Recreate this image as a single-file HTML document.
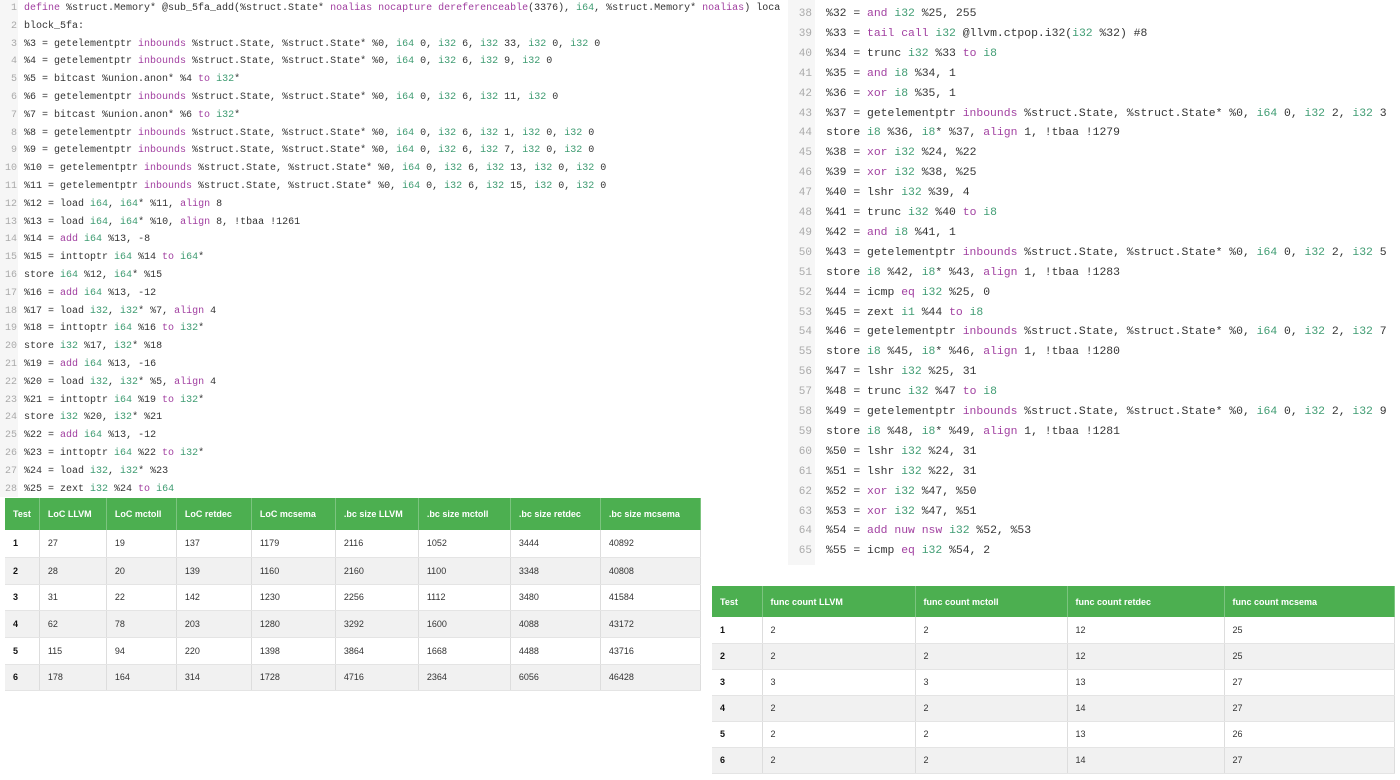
<!DOCTYPE html>
<html><head><meta charset="utf-8"><style>
*{margin:0;padding:0;box-sizing:border-box}
body{width:1400px;height:780px;background:#fff;position:relative;overflow:hidden;font-family:"Liberation Mono",monospace;color:#333}
.code{position:absolute;white-space:pre}
.ln{position:absolute;color:#aaa;text-align:right}
.k{color:#a13fa0}.t{color:#3f9c72}
.L div.l{position:absolute;left:24px;font-size:10px;height:18px;line-height:18px}
.L div.ln{left:0;width:17px;font-size:10px;line-height:18px}
.R div.l{position:absolute;left:826px;font-size:11.4px;line-height:20px}
.R div.ln{left:790px;width:22px;font-size:11px;line-height:20px}
table{position:absolute;border-collapse:collapse;font-family:"Liberation Sans",sans-serif;font-size:9px;color:#333}
th{background:#4caf50;color:#fff;text-align:left;font-weight:bold;padding:0 8px;border-right:1px solid #7cc47f}
td{padding:0 8px;border-right:1px solid #ddd;border-bottom:1px solid #e4e4e4}
tr:nth-child(odd) td{background:#f1f1f1}
td:first-child{font-weight:bold;color:#111}
</style></head><body>
<div style="position:absolute;left:0;top:0;width:18px;height:497px;background:#f6f6f6"></div>
<div style="position:absolute;left:788px;top:0;width:27px;height:565px;background:#f6f6f6"></div>
<div class="L">
<div class="ln" style="top:0">1</div><div class="l" style="top:0"><span class="k">define</span> %struct.Memory* @sub_5fa_add(%struct.State* <span class="k">noalias nocapture dereferenceable</span>(3376), <span class="t">i64</span>, %struct.Memory* <span class="k">noalias</span>) loca</div>
<div class="ln" style="top:17.8px">2</div><div class="l" style="top:17.8px">block_5fa:</div>
<div class="ln" style="top:35.6px">3</div><div class="l" style="top:35.6px">  %3 = getelementptr <span class="k">inbounds</span> %struct.State, %struct.State* %0, <span class="t">i64</span> 0, <span class="t">i32</span> 6, <span class="t">i32</span> 33, <span class="t">i32</span> 0, <span class="t">i32</span> 0</div>
<div class="ln" style="top:53.4px">4</div><div class="l" style="top:53.4px">  %4 = getelementptr <span class="k">inbounds</span> %struct.State, %struct.State* %0, <span class="t">i64</span> 0, <span class="t">i32</span> 6, <span class="t">i32</span> 9, <span class="t">i32</span> 0</div>
<div class="ln" style="top:71.2px">5</div><div class="l" style="top:71.2px">  %5 = bitcast %union.anon* %4 <span class="k">to</span> <span class="t">i32</span>*</div>
<div class="ln" style="top:89px">6</div><div class="l" style="top:89px">  %6 = getelementptr <span class="k">inbounds</span> %struct.State, %struct.State* %0, <span class="t">i64</span> 0, <span class="t">i32</span> 6, <span class="t">i32</span> 11, <span class="t">i32</span> 0</div>
<div class="ln" style="top:106.8px">7</div><div class="l" style="top:106.8px">  %7 = bitcast %union.anon* %6 <span class="k">to</span> <span class="t">i32</span>*</div>
<div class="ln" style="top:124.6px">8</div><div class="l" style="top:124.6px">  %8 = getelementptr <span class="k">inbounds</span> %struct.State, %struct.State* %0, <span class="t">i64</span> 0, <span class="t">i32</span> 6, <span class="t">i32</span> 1, <span class="t">i32</span> 0, <span class="t">i32</span> 0</div>
<div class="ln" style="top:142.4px">9</div><div class="l" style="top:142.4px">  %9 = getelementptr <span class="k">inbounds</span> %struct.State, %struct.State* %0, <span class="t">i64</span> 0, <span class="t">i32</span> 6, <span class="t">i32</span> 7, <span class="t">i32</span> 0, <span class="t">i32</span> 0</div>
<div class="ln" style="top:160.2px">10</div><div class="l" style="top:160.2px">  %10 = getelementptr <span class="k">inbounds</span> %struct.State, %struct.State* %0, <span class="t">i64</span> 0, <span class="t">i32</span> 6, <span class="t">i32</span> 13, <span class="t">i32</span> 0, <span class="t">i32</span> 0</div>
<div class="ln" style="top:178px">11</div><div class="l" style="top:178px">  %11 = getelementptr <span class="k">inbounds</span> %struct.State, %struct.State* %0, <span class="t">i64</span> 0, <span class="t">i32</span> 6, <span class="t">i32</span> 15, <span class="t">i32</span> 0, <span class="t">i32</span> 0</div>
<div class="ln" style="top:195.8px">12</div><div class="l" style="top:195.8px">  %12 = load <span class="t">i64</span>, <span class="t">i64</span>* %11, <span class="k">align</span> 8</div>
<div class="ln" style="top:213.6px">13</div><div class="l" style="top:213.6px">  %13 = load <span class="t">i64</span>, <span class="t">i64</span>* %10, <span class="k">align</span> 8, !tbaa !1261</div>
<div class="ln" style="top:231.4px">14</div><div class="l" style="top:231.4px">  %14 = <span class="k">add</span> <span class="t">i64</span> %13, -8</div>
<div class="ln" style="top:249.2px">15</div><div class="l" style="top:249.2px">  %15 = inttoptr <span class="t">i64</span> %14 <span class="k">to</span> <span class="t">i64</span>*</div>
<div class="ln" style="top:267px">16</div><div class="l" style="top:267px">  store <span class="t">i64</span> %12, <span class="t">i64</span>* %15</div>
<div class="ln" style="top:284.8px">17</div><div class="l" style="top:284.8px">  %16 = <span class="k">add</span> <span class="t">i64</span> %13, -12</div>
<div class="ln" style="top:302.6px">18</div><div class="l" style="top:302.6px">  %17 = load <span class="t">i32</span>, <span class="t">i32</span>* %7, <span class="k">align</span> 4</div>
<div class="ln" style="top:320.4px">19</div><div class="l" style="top:320.4px">  %18 = inttoptr <span class="t">i64</span> %16 <span class="k">to</span> <span class="t">i32</span>*</div>
<div class="ln" style="top:338.2px">20</div><div class="l" style="top:338.2px">  store <span class="t">i32</span> %17, <span class="t">i32</span>* %18</div>
<div class="ln" style="top:356px">21</div><div class="l" style="top:356px">  %19 = <span class="k">add</span> <span class="t">i64</span> %13, -16</div>
<div class="ln" style="top:373.8px">22</div><div class="l" style="top:373.8px">  %20 = load <span class="t">i32</span>, <span class="t">i32</span>* %5, <span class="k">align</span> 4</div>
<div class="ln" style="top:391.6px">23</div><div class="l" style="top:391.6px">  %21 = inttoptr <span class="t">i64</span> %19 <span class="k">to</span> <span class="t">i32</span>*</div>
<div class="ln" style="top:409.4px">24</div><div class="l" style="top:409.4px">  store <span class="t">i32</span> %20, <span class="t">i32</span>* %21</div>
<div class="ln" style="top:427.2px">25</div><div class="l" style="top:427.2px">  %22 = <span class="k">add</span> <span class="t">i64</span> %13, -12</div>
<div class="ln" style="top:445px">26</div><div class="l" style="top:445px">  %23 = inttoptr <span class="t">i64</span> %22 <span class="k">to</span> <span class="t">i32</span>*</div>
<div class="ln" style="top:462.8px">27</div><div class="l" style="top:462.8px">  %24 = load <span class="t">i32</span>, <span class="t">i32</span>* %23</div>
<div class="ln" style="top:480.6px">28</div><div class="l" style="top:480.6px">  %25 = zext <span class="t">i32</span> %24 <span class="k">to</span> <span class="t">i64</span></div>
</div>
<div class="R">
<div class="ln" style="top:4px">38</div><div class="l" style="top:4px">%32 = <span class="k">and</span> <span class="t">i32</span> %25, 255</div>
<div class="ln" style="top:23.9px">39</div><div class="l" style="top:23.9px">%33 = <span class="k">tail call</span> <span class="t">i32</span> @llvm.ctpop.i32(<span class="t">i32</span> %32) #8</div>
<div class="ln" style="top:43.8px">40</div><div class="l" style="top:43.8px">%34 = trunc <span class="t">i32</span> %33 <span class="k">to</span> <span class="t">i8</span></div>
<div class="ln" style="top:63.7px">41</div><div class="l" style="top:63.7px">%35 = <span class="k">and</span> <span class="t">i8</span> %34, 1</div>
<div class="ln" style="top:83.6px">42</div><div class="l" style="top:83.6px">%36 = <span class="k">xor</span> <span class="t">i8</span> %35, 1</div>
<div class="ln" style="top:103.5px">43</div><div class="l" style="top:103.5px">%37 = getelementptr <span class="k">inbounds</span> %struct.State, %struct.State* %0, <span class="t">i64</span> 0, <span class="t">i32</span> 2, <span class="t">i32</span> 3</div>
<div class="ln" style="top:123.4px">44</div><div class="l" style="top:123.4px">store <span class="t">i8</span> %36, <span class="t">i8</span>* %37, <span class="k">align</span> 1, !tbaa !1279</div>
<div class="ln" style="top:143.3px">45</div><div class="l" style="top:143.3px">%38 = <span class="k">xor</span> <span class="t">i32</span> %24, %22</div>
<div class="ln" style="top:163.2px">46</div><div class="l" style="top:163.2px">%39 = <span class="k">xor</span> <span class="t">i32</span> %38, %25</div>
<div class="ln" style="top:183.1px">47</div><div class="l" style="top:183.1px">%40 = lshr <span class="t">i32</span> %39, 4</div>
<div class="ln" style="top:203px">48</div><div class="l" style="top:203px">%41 = trunc <span class="t">i32</span> %40 <span class="k">to</span> <span class="t">i8</span></div>
<div class="ln" style="top:222.9px">49</div><div class="l" style="top:222.9px">%42 = <span class="k">and</span> <span class="t">i8</span> %41, 1</div>
<div class="ln" style="top:242.8px">50</div><div class="l" style="top:242.8px">%43 = getelementptr <span class="k">inbounds</span> %struct.State, %struct.State* %0, <span class="t">i64</span> 0, <span class="t">i32</span> 2, <span class="t">i32</span> 5</div>
<div class="ln" style="top:262.7px">51</div><div class="l" style="top:262.7px">store <span class="t">i8</span> %42, <span class="t">i8</span>* %43, <span class="k">align</span> 1, !tbaa !1283</div>
<div class="ln" style="top:282.6px">52</div><div class="l" style="top:282.6px">%44 = icmp <span class="k">eq</span> <span class="t">i32</span> %25, 0</div>
<div class="ln" style="top:302.5px">53</div><div class="l" style="top:302.5px">%45 = zext <span class="t">i1</span> %44 <span class="k">to</span> <span class="t">i8</span></div>
<div class="ln" style="top:322.4px">54</div><div class="l" style="top:322.4px">%46 = getelementptr <span class="k">inbounds</span> %struct.State, %struct.State* %0, <span class="t">i64</span> 0, <span class="t">i32</span> 2, <span class="t">i32</span> 7</div>
<div class="ln" style="top:342.3px">55</div><div class="l" style="top:342.3px">store <span class="t">i8</span> %45, <span class="t">i8</span>* %46, <span class="k">align</span> 1, !tbaa !1280</div>
<div class="ln" style="top:362.2px">56</div><div class="l" style="top:362.2px">%47 = lshr <span class="t">i32</span> %25, 31</div>
<div class="ln" style="top:382.1px">57</div><div class="l" style="top:382.1px">%48 = trunc <span class="t">i32</span> %47 <span class="k">to</span> <span class="t">i8</span></div>
<div class="ln" style="top:402px">58</div><div class="l" style="top:402px">%49 = getelementptr <span class="k">inbounds</span> %struct.State, %struct.State* %0, <span class="t">i64</span> 0, <span class="t">i32</span> 2, <span class="t">i32</span> 9</div>
<div class="ln" style="top:421.9px">59</div><div class="l" style="top:421.9px">store <span class="t">i8</span> %48, <span class="t">i8</span>* %49, <span class="k">align</span> 1, !tbaa !1281</div>
<div class="ln" style="top:441.8px">60</div><div class="l" style="top:441.8px">%50 = lshr <span class="t">i32</span> %24, 31</div>
<div class="ln" style="top:461.7px">61</div><div class="l" style="top:461.7px">%51 = lshr <span class="t">i32</span> %22, 31</div>
<div class="ln" style="top:481.6px">62</div><div class="l" style="top:481.6px">%52 = <span class="k">xor</span> <span class="t">i32</span> %47, %50</div>
<div class="ln" style="top:501.5px">63</div><div class="l" style="top:501.5px">%53 = <span class="k">xor</span> <span class="t">i32</span> %47, %51</div>
<div class="ln" style="top:521.4px">64</div><div class="l" style="top:521.4px">%54 = <span class="k">add nuw nsw</span> <span class="t">i32</span> %52, %53</div>
<div class="ln" style="top:541.3px">65</div><div class="l" style="top:541.3px">%55 = icmp <span class="k">eq</span> <span class="t">i32</span> %54, 2</div>
</div>

<table style="left:5px;top:498px;width:696px">
<colgroup><col style="width:33px"><col style="width:67px"><col style="width:70px"><col style="width:75px"><col style="width:84px"><col style="width:83px"><col style="width:92px"><col style="width:90px"><col></colgroup>
<tr style="height:32px"><th>Test</th><th>LoC LLVM</th><th>LoC mctoll</th><th>LoC retdec</th><th>LoC mcsema</th><th>.bc size LLVM</th><th>.bc size mctoll</th><th>.bc size retdec</th><th>.bc size mcsema</th></tr>
<tr style="height:27px"><td>1</td><td>27</td><td>19</td><td>137</td><td>1179</td><td>2116</td><td>1052</td><td>3444</td><td>40892</td></tr>
<tr style="height:27px"><td>2</td><td>28</td><td>20</td><td>139</td><td>1160</td><td>2160</td><td>1100</td><td>3348</td><td>40808</td></tr>
<tr style="height:26px"><td>3</td><td>31</td><td>22</td><td>142</td><td>1230</td><td>2256</td><td>1112</td><td>3480</td><td>41584</td></tr>
<tr style="height:27px"><td>4</td><td>62</td><td>78</td><td>203</td><td>1280</td><td>3292</td><td>1600</td><td>4088</td><td>43172</td></tr>
<tr style="height:27px"><td>5</td><td>115</td><td>94</td><td>220</td><td>1398</td><td>3864</td><td>1668</td><td>4488</td><td>43716</td></tr>
<tr style="height:26px"><td>6</td><td>178</td><td>164</td><td>314</td><td>1728</td><td>4716</td><td>2364</td><td>6056</td><td>46428</td></tr>
</table>

<table style="left:712px;top:586px;width:683px">
<colgroup><col style="width:50px"><col style="width:153px"><col style="width:152px"><col style="width:157px"><col></colgroup>
<tr style="height:31px"><th>Test</th><th>func count LLVM</th><th>func count mctoll</th><th>func count retdec</th><th>func count mcsema</th></tr>
<tr style="height:26px"><td>1</td><td>2</td><td>2</td><td>12</td><td>25</td></tr>
<tr style="height:26px"><td>2</td><td>2</td><td>2</td><td>12</td><td>25</td></tr>
<tr style="height:26px"><td>3</td><td>3</td><td>3</td><td>13</td><td>27</td></tr>
<tr style="height:26px"><td>4</td><td>2</td><td>2</td><td>14</td><td>27</td></tr>
<tr style="height:26px"><td>5</td><td>2</td><td>2</td><td>13</td><td>26</td></tr>
<tr style="height:26px"><td>6</td><td>2</td><td>2</td><td>14</td><td>27</td></tr>
</table>
</body></html>
